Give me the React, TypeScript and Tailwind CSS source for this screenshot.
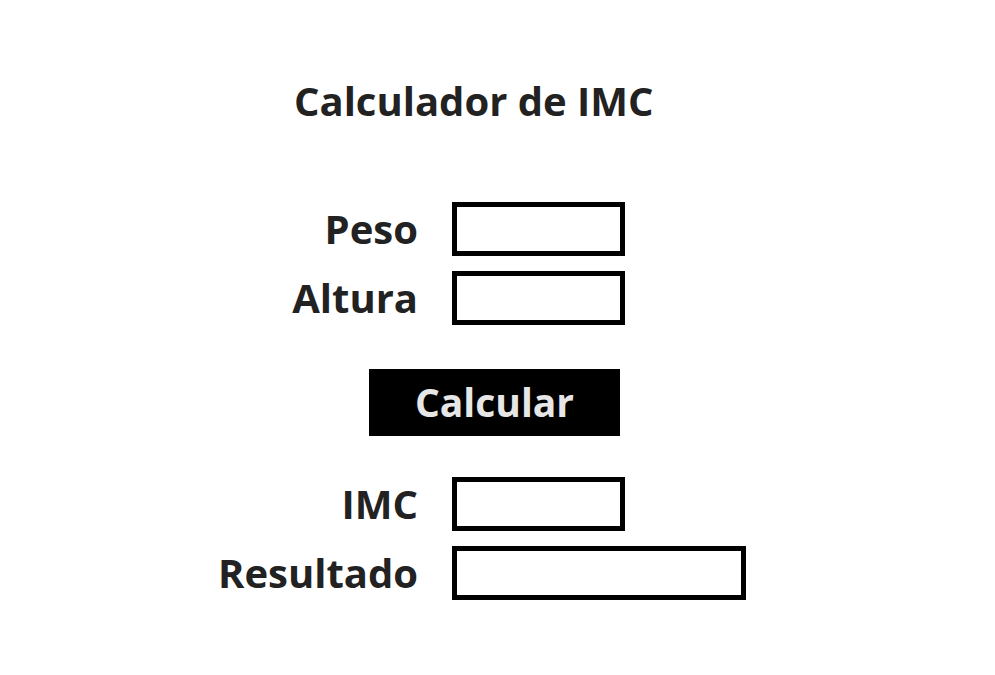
export default function App() {
  const font = { fontFamily: '"Open Sans", "Liberation Sans", sans-serif' };
  return (
    <div className="min-h-[675px] w-[995px] bg-white text-[#222222]" style={font}>
      <div className="flex flex-col pt-[81px]">
        <h1 className="ml-[294px] text-[40px] font-bold leading-[40px]">
          Calculador de IMC
        </h1>

        <div className="mt-[81px] grid grid-cols-[418px_auto] gap-x-[34px] gap-y-[15px]">
          <label className="flex h-[54px] items-center justify-end text-[40px] font-bold">
            Peso
          </label>
          <input className="h-[54px] w-[173px] border-[5px] border-black bg-white outline-none" />
          <label className="flex h-[54px] items-center justify-end text-[40px] font-bold">
            Altura
          </label>
          <input className="h-[54px] w-[173px] border-[5px] border-black bg-white outline-none" />
        </div>

        <button className="ml-[369px] mt-[44px] h-[67px] w-[251px] bg-black text-[39px] font-bold text-[#e6e6e6]">
          Calcular
        </button>

        <div className="mt-[41px] grid grid-cols-[418px_auto] gap-x-[34px] gap-y-[15px]">
          <label className="flex h-[54px] items-center justify-end text-[40px] font-bold">
            IMC
          </label>
          <input readOnly className="h-[54px] w-[173px] border-[5px] border-black bg-white outline-none" />
          <label className="flex h-[54px] items-center justify-end text-[40px] font-bold">
            Resultado
          </label>
          <input readOnly className="h-[54px] w-[294px] border-[5px] border-black bg-white outline-none" />
        </div>
      </div>
    </div>
  );
}
